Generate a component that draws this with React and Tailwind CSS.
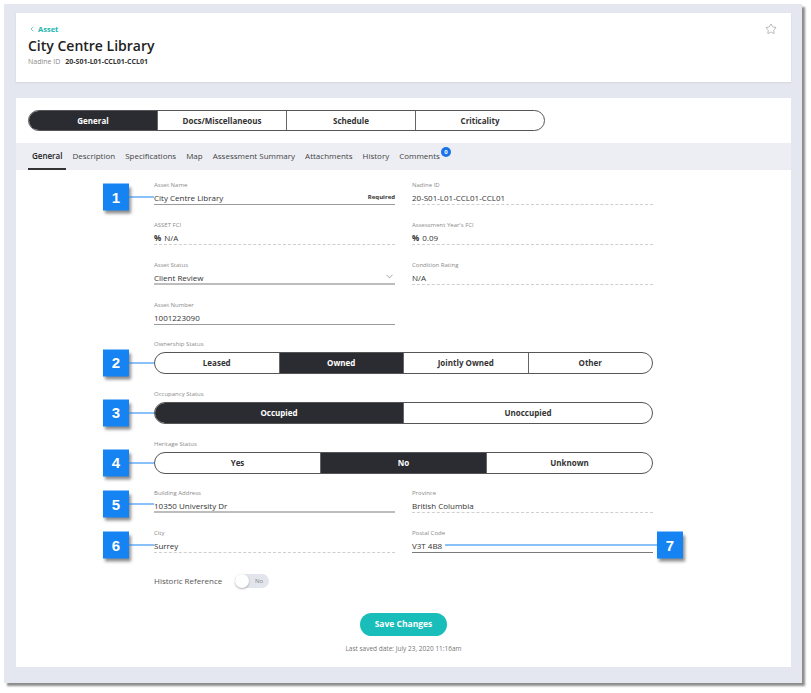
import React from 'react';
import { Star, ChevronDown, ChevronLeft } from 'lucide-react';

const font = { fontFamily: '"Open Sans", "Liberation Sans", sans-serif' };

const Callout = ({ n }) => (
    <div className="absolute left-[-51px] top-1/2 -translate-y-1/2 flex items-center">
        <div className="w-[26px] h-[27px] bg-[#1683f2] text-white flex items-center justify-center text-[15px] font-bold shadow-[2px_3px_3px_rgba(0,0,0,0.45)]" style={{ fontFamily: '"Liberation Sans", Arial, sans-serif' }}>{n}</div>
        <div className="w-[25px] h-px bg-[#1683f2]" />
    </div>
);

const Field = ({ label, children, line = 'dashed', callout, right }) => {
    const lineClass = {
        dashed: 'border-b border-dashed border-[#cfcfcf]',
        solid: 'border-b border-[#9a9a9a]',
        thick: 'border-b-2 border-[#bdbdbd]',
        dark: 'border-b border-[#7a7a7a]',
    }[line];
    return (
        <div>
            <div className="h-[8px] text-[6px] leading-[8px] text-[#8a8a8a]">{label}</div>
            <div className={`relative h-[16px] pt-[2px] flex items-start text-[8px] leading-[13px] text-[#333] ${lineClass}`}>
                {callout && <Callout n={callout} />}
                {children}
                {right}
            </div>
        </div>
    );
};

const Segmented = ({ label, options, active, callout }) => (
    <div>
        <div className="h-[8px] text-[6px] leading-[8px] text-[#8a8a8a]">{label}</div>
        <div className="relative mt-[4px]">
            {callout && <Callout n={callout} />}
            <div className="flex h-[22px] rounded-full border border-[#555] overflow-hidden bg-white">
                {options.map((o, i) => (
                    <div
                        key={o}
                        className={`flex-1 flex items-center justify-center text-[8px] font-bold ${i === active ? 'bg-[#2b2c31] text-white' : 'text-[#333]'} ${i > 0 ? 'border-l border-[#666]' : ''}`}
                    >
                        {o}
                    </div>
                ))}
            </div>
        </div>
    </div>
);

const subTabs = ['General', 'Description', 'Specifications', 'Map', 'Assessment Summary', 'Attachments', 'History', 'Comments'];

export default function App() {
    return (
        <div className="w-[811px] h-[693px] bg-white pt-[4px] pl-[4px]" style={font}>
            <div className="w-[798px] h-[679px] bg-[#e4e7f0] pt-[9px] pl-[12px] shadow-[3px_3px_2px_rgba(0,0,0,0.45)]">
                {/* header card */}
                <div className="relative w-[775px] h-[69px] bg-white pt-[11px] pl-[12px] shadow-[0_1px_2px_rgba(0,0,0,0.08)]">
                    <div className="h-[10px] flex items-center gap-[2px] text-[7.5px] font-bold text-[#1ab5b0] leading-[10px]">
                        <ChevronLeft size={8} strokeWidth={2} />
                        <span>Asset</span>
                    </div>
                    <div className="mt-[3px] h-[18px] text-[14px] leading-[18px] font-semibold text-[#222]">City Centre Library</div>
                    <div className="mt-[2px] h-[10px] flex items-center gap-[5px] text-[7px] leading-[10px]">
                        <span className="text-[#8a8a8a]">Nadine ID</span>
                        <span className="font-bold text-[#333]">20-S01-L01-CCL01-CCL01</span>
                    </div>
                    <Star size={12} strokeWidth={1} className="absolute right-[14px] top-[10px] text-[#777]" />
                </div>

                {/* main card */}
                <div className="mt-[16px] w-[775px] h-[569px] bg-white pt-[12px]">
                    <div className="px-[12px]">
                        <div className="flex w-[517px] h-[21px] rounded-full border border-[#555] overflow-hidden">
                            {['General', 'Docs/Miscellaneous', 'Schedule', 'Criticality'].map((t, i) => (
                                <div key={t} className={`flex-1 flex items-center justify-center text-[8px] font-bold ${i === 0 ? 'bg-[#2b2c31] text-white' : 'text-[#333]'} ${i > 0 ? 'border-l border-[#666]' : ''}`}>
                                    {t}
                                </div>
                            ))}
                        </div>
                    </div>

                    <div className="mt-[12px] h-[27px] bg-[#eceef3] flex items-stretch pl-[12px]">
                        {subTabs.map((t, i) => (
                            <div key={t} className={`relative px-[4px] mr-[2px] flex items-center text-[8px] ${i === 0 ? 'font-semibold text-[#222] border-b-2 border-[#333]' : 'text-[#444] border-b-2 border-transparent'}`}>
                                {t}
                                {t === 'Comments' && (
                                    <span className="absolute right-[-7px] top-[4px] w-[10px] h-[10px] rounded-full bg-[#1a73e8] text-white text-[6px] font-bold flex items-center justify-center">0</span>
                                )}
                            </div>
                        ))}
                    </div>

                    <div className="ml-[138px] w-[499px] pt-[11px]">
                        <div className="grid grid-cols-2 gap-x-[17px] gap-y-[16px]">
                            <Field label="Asset Name" line="solid" callout={1} right={<span className="ml-auto text-[6px] font-bold text-[#333] leading-[13px]">Required</span>}>
                                City Centre Library
                            </Field>
                            <Field label="Nadine ID">20-S01-L01-CCL01-CCL01</Field>
                            <Field label="ASSET FCI"><span className="font-bold mr-[3px]">%</span>N/A</Field>
                            <Field label="Assessment Year's FCI"><span className="font-bold mr-[3px]">%</span>0.09</Field>
                            <Field label="Asset Status" line="thick" right={<ChevronDown size={11} strokeWidth={1.2} className="ml-auto text-[#555]" />}>
                                Client Review
                            </Field>
                            <Field label="Condition Rating">N/A</Field>
                            <Field label="Asset Number" line="solid">1001223090</Field>
                        </div>

                        <div className="mt-[15px]">
                            <Segmented label="Ownership Status" options={['Leased', 'Owned', 'Jointly Owned', 'Other']} active={1} callout={2} />
                        </div>
                        <div className="mt-[16px]">
                            <Segmented label="Occupancy Status" options={['Occupied', 'Unoccupied']} active={0} callout={3} />
                        </div>
                        <div className="mt-[16px]">
                            <Segmented label="Heritage Status" options={['Yes', 'No', 'Unknown']} active={1} callout={4} />
                        </div>

                        <div className="mt-[15px] grid grid-cols-2 gap-x-[17px] gap-y-[16px]">
                            <Field label="Building Address" line="thick" callout={5}>10350 University Dr</Field>
                            <Field label="Province">British Columbia</Field>
                            <Field label="City" callout={6}>Surrey</Field>
                            <Field label="Postal Code" line="dark">
                                V3T 4B8
                                <div className="absolute left-[33px] right-[-30px] top-1/2 -translate-y-1/2 flex items-center">
                                    <div className="flex-1 h-px bg-[#1683f2]" />
                                    <div className="w-[26px] h-[27px] bg-[#1683f2] text-white flex items-center justify-center text-[15px] font-bold shadow-[2px_3px_3px_rgba(0,0,0,0.45)]" style={{ fontFamily: '"Liberation Sans", Arial, sans-serif' }}>7</div>
                                </div>
                            </Field>
                        </div>

                        <div className="mt-[21px] h-[14px] flex items-center">
                            <span className="text-[8px] text-[#555]">Historic Reference</span>
                            <div className="ml-[13px] w-[34px] h-[14px] rounded-full bg-[#e3e5ec] relative flex items-center justify-end pr-[6px]">
                                <span className="absolute left-0 top-0 w-[14px] h-[14px] rounded-full bg-white shadow-[0_1px_2px_rgba(0,0,0,0.3)]" />
                                <span className="text-[6px] text-[#888]">No</span>
                            </div>
                        </div>
                    </div>

                    <div className="mt-[25px] flex flex-col items-center">
                        <div className="w-[87px] h-[23px] rounded-full bg-[#19bdb9] text-white text-[8.5px] font-bold flex items-center justify-center">Save Changes</div>
                        <div className="mt-[8px] h-[10px] leading-[10px] text-[6.5px] text-[#777]">Last saved date: July 23, 2020 11:16am</div>
                    </div>
                </div>
            </div>
        </div>
    );
}
